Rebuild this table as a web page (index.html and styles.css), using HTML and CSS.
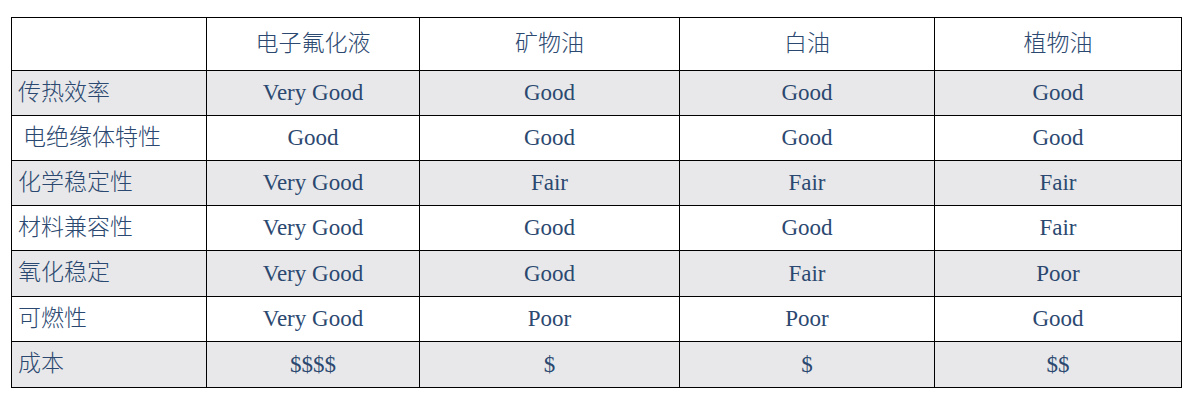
FILE: index.html
```html
<!DOCTYPE html>
<html lang="zh">
<head>
<meta charset="utf-8">
<link rel="stylesheet" href="styles.css">
</head>
<body>
<table class="cmp">
  <colgroup>
    <col class="c1"><col class="c2"><col class="c3"><col class="c4"><col class="c5">
  </colgroup>
  <tr class="head"><td></td><td>电子氟化液</td><td>矿物油</td><td>白油</td><td>植物油</td></tr>
  <tr class="grey"><td class="lbl">传热效率</td><td>Very Good</td><td>Good</td><td>Good</td><td>Good</td></tr>
  <tr><td class="lbl">&nbsp;电绝缘体特性</td><td>Good</td><td>Good</td><td>Good</td><td>Good</td></tr>
  <tr class="grey"><td class="lbl">化学稳定性</td><td>Very Good</td><td>Fair</td><td>Fair</td><td>Fair</td></tr>
  <tr><td class="lbl">材料兼容性</td><td>Very Good</td><td>Good</td><td>Good</td><td>Fair</td></tr>
  <tr class="grey tall"><td class="lbl">氧化稳定</td><td>Very Good</td><td>Good</td><td>Fair</td><td>Poor</td></tr>
  <tr><td class="lbl">可燃性</td><td>Very Good</td><td>Poor</td><td>Poor</td><td>Good</td></tr>
  <tr class="grey tall"><td class="lbl">成本</td><td>$$$$</td><td>$</td><td>$</td><td>$$</td></tr>
</table>
</body>
</html>
```
FILE: styles.css
```css
html, body {
  margin: 0;
  padding: 0;
  background: #ffffff;
}
body {
  padding: 17px 0 0 11px;
}
.cmp {
  border-collapse: collapse;
  table-layout: fixed;
  width: 1171px;
  color: #2b4870;
  font-family: "Liberation Serif", "Noto Sans CJK SC", serif;
  font-size: 23px;
}
.c1 { width: 195px; }
.c2 { width: 213px; }
.c3 { width: 260px; }
.c4 { width: 255px; }
.c5 { width: 247px; }
.cmp td {
  border: 1px solid #000;
  text-align: center;
  padding: 0;
  height: 44px;
  line-height: 26px;
  white-space: nowrap;
}
.cmp tr.tall td { height: 45px; }
.cmp tr.head td {
  height: 46px;
  padding-bottom: 6px;
  font-family: "Noto Sans CJK SC", sans-serif;
  font-weight: 300;
  font-size: 23px;
}
.cmp tr.grey td { background: #e8e8ea; }
.cmp td.lbl,
.cmp tr.tall td.lbl {
  height: 37px;
  text-align: left;
  padding-left: 6px;
  padding-bottom: 7px;
  font-family: "Noto Sans CJK SC", sans-serif;
  font-weight: 300;
  font-size: 23px;
}
```
